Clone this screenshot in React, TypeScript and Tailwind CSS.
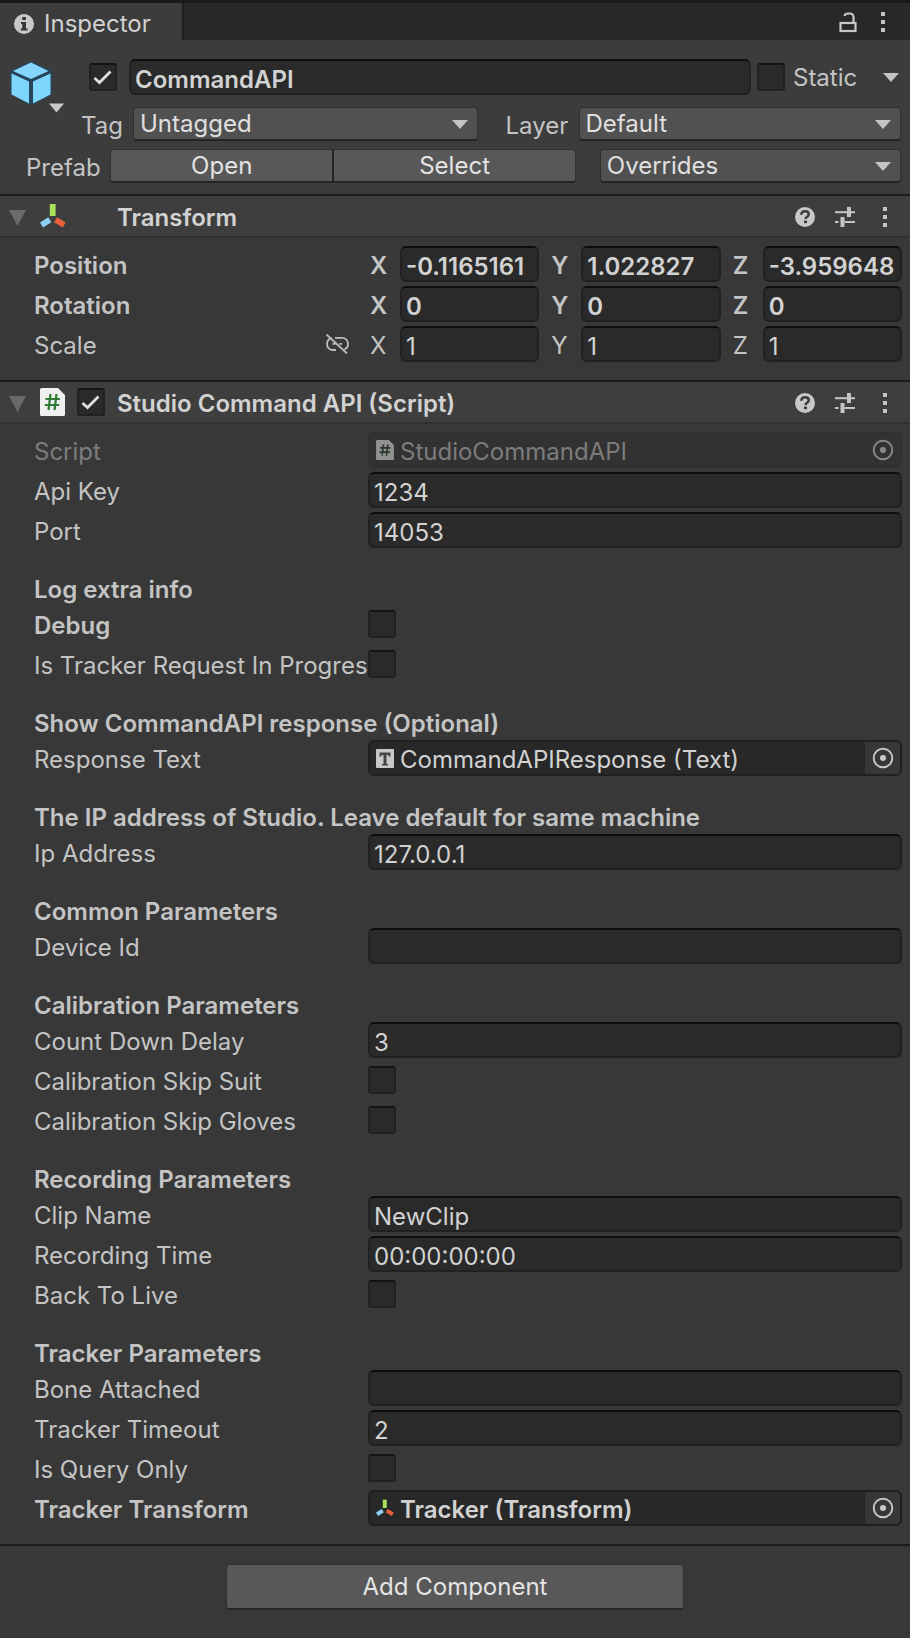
import React, { useId } from 'react';

const inputClass =
  'h-9 w-full min-w-0 rounded-md border-2 border-[#212121] border-t-[#0d0d0d] bg-[#2a2a2a] pl-1 pt-1 text-[#d2d2d2] outline-none';

function Kebab() {
  return (
    <svg className="h-5 w-5" viewBox="0 0 20 20" fill="#c4c4c4">
      <rect x="8" y="0" width="4" height="4" />
      <rect x="8" y="8" width="4" height="4" />
      <rect x="8" y="16" width="4" height="4" />
    </svg>
  );
}

function HelpIcon() {
  return (
    <svg className="h-5 w-5" viewBox="0 0 20 20">
      <circle cx="10" cy="10" r="10" fill="#c8c8c8" />
      <path d="M6.2 7.8C6.3 5.4 8 4.2 10 4.200c2.200 0 3.800 1.200 3.800 3.100 0 2.300-3.100 2.500-3.400 4.700" fill="none" stroke="#3c3c3c" strokeWidth="2.400" />
      <rect x="9" y="13.600" width="3" height="2.600" fill="#3c3c3c" />
    </svg>
  );
}

function PresetIcon() {
  return (
    <svg className="h-5 w-5" viewBox="0 0 20 20" fill="#c4c4c4">
      <rect x="0" y="4.200" width="12" height="2" />
      <rect x="12" y="0" width="4" height="10" />
      <rect x="16" y="4.200" width="4" height="2" />
      <rect x="0" y="14" width="3.500" height="2" />
      <rect x="5.500" y="10" width="4" height="10" />
      <rect x="9.500" y="14" width="10.500" height="2" />
    </svg>
  );
}

function AxisIcon({ className }: { className: string }) {
  return (
    <svg className={className} viewBox="0 0 26 26" fill="none" strokeWidth="5.800">
      <path d="M12.700 1v12" stroke="#a8e05a" />
      <path d="M9.800 16.800L1.500 22" stroke="#8fd0f5" />
      <path d="M15.600 16.800l8.600 5.200" stroke="#e8603c" />
    </svg>
  );
}

function ScriptIcon({ className, stroke = '#2f7a35' }: { className: string; stroke?: string }) {
  return (
    <svg className={className} viewBox="0 0 25 28">
      <path d="M1.500 0H18l7 7v19.500a1.500 1.500 0 0 1-1.500 1.500h-22A1.500 1.500 0 0 1 0 26.500V1.500A1.500 1.500 0 0 1 1.500 0z" fill="#f0f0f0" />
      <path d="M10.500 6L8.500 22M16.500 6l-2 16M5.500 11h14.500M4.800 17h14.500" fill="none" stroke={stroke} strokeWidth="2.200" />
    </svg>
  );
}

function TextIcon({ className }: { className: string }) {
  return (
    <svg className={className} viewBox="0 0 18 19">
      <rect width="18" height="19" rx="1" fill="#c8c8c8" />
      <path d="M3.500 3.500h11v4h-2v-1.500h-2v9h1.500v1.500H6v-1.500h1.500V6h-2v1.500h-2z" fill="#444" />
    </svg>
  );
}

function Caret({ className }: { className: string }) {
  return (
    <svg className={className} viewBox="0 0 16 9" fill="currentColor">
      <path d="M0 0h16L8 9z" />
    </svg>
  );
}

function Checkbox({ id, label, checked = false }: { id?: string; label?: string; checked?: boolean }) {
  return (
    <span className="grid h-7 w-7 shrink-0">
      <input
        id={id}
        aria-label={label}
        type="checkbox"
        defaultChecked={checked}
        className="peer col-start-1 row-start-1 h-7 w-7 appearance-none rounded-[3px] border-2 border-[#212121] border-t-[#141414] bg-[#2a2a2a]"
      />
      <svg
        className="pointer-events-none invisible col-start-1 row-start-1 h-7 w-7 peer-checked:visible"
        viewBox="0 0 28 28"
        fill="none"
        stroke="#e0e0e0"
        strokeWidth="2.800"
      >
        <path d="M5.500 15l5 4.500L21.500 8.500" />
      </svg>
    </span>
  );
}

function Dropdown({ id, label, value }: { id?: string; label?: string; value: string }) {
  return (
    <span className="grid flex-1 items-center">
      <select
        id={id}
        aria-label={label}
        className="col-start-1 row-start-1 h-[34px] w-full appearance-none rounded-[4px] border border-[#303030] border-b-2 border-b-[#242424] bg-[#515151] pl-1.5 text-[#e0e0e0]"
      >
        <option>{value}</option>
      </select>
      <Caret className="pointer-events-none col-start-1 row-start-1 mr-2.5 h-[9px] w-4 justify-self-end text-[#c4c4c4]" />
    </span>
  );
}

function Row({ label, bold, dim, children }: { label: string; bold?: boolean; dim?: boolean; children: (id: string) => React.ReactNode }) {
  const id = useId();
  return (
    <div className={`flex h-9 items-center ${bold ? 'font-semibold' : ''}`}>
      <label htmlFor={id} className={`w-[334px] shrink-0 overflow-hidden pt-1 whitespace-nowrap ${dim ? 'text-[#7c7c7c]' : ''}`}>
        {label}
      </label>
      {children(id)}
    </div>
  );
}

function TextRow({ label, value }: { label: string; value: string }) {
  return <Row label={label}>{(id) => <input id={id} type="text" defaultValue={value} className={inputClass} />}</Row>;
}

function ToggleRow({ label, bold }: { label: string; bold?: boolean }) {
  return <Row label={label} bold={bold}>{(id) => <Checkbox id={id} />}</Row>;
}

interface ObjectRowProps {
  label: string;
  value: string;
  icon: React.ReactNode;
  bold?: boolean;
  disabled?: boolean;
}

function ObjectRow({ label, value, icon, bold, disabled }: ObjectRowProps) {
  return (
    <Row label={label} bold={bold} dim={disabled}>
      {(id) => (
        <div className={`flex h-9 min-w-0 flex-1 items-center rounded-md border-2 pl-1.5 ${disabled ? 'border-[#303030] bg-[#323232] text-[#7c7c7c]' : 'border-[#202020] bg-[#282828] text-[#d2d2d2]'}`}>
          <span className={disabled ? 'opacity-50' : ''}>{icon}</span>
          <input id={id} type="text" readOnly disabled={disabled} defaultValue={value} className="ml-1.5 h-8 min-w-0 flex-1 pt-1 outline-none" />
          <button
            type="button"
            disabled={disabled}
            aria-label={`Pick ${label}`}
            className={`flex h-8 w-[35px] items-center justify-center rounded-r-[4px] ${disabled ? 'text-[#8a8a8a]' : 'bg-[#373737] text-[#c8c8c8]'}`}
          >
            <svg className="h-[22px] w-[22px]" viewBox="0 0 22 22">
              <circle cx="11" cy="11" r="9.300" fill="none" stroke="currentColor" strokeWidth="1.900" />
              <circle cx="11" cy="11" r="3" fill="currentColor" />
            </svg>
          </button>
        </div>
      )}
    </Row>
  );
}

function Header({ children }: { children: string }) {
  return <h3 className="flex h-[50px] items-end leading-6 font-semibold whitespace-nowrap">{children}</h3>;
}

function VectorRow({ label, values, bold, linkable }: { label: string; values: string[]; bold?: boolean; linkable?: boolean }) {
  return (
    <div className={`flex h-9 items-center ${bold ? 'font-semibold' : ''}`}>
      <div className="flex w-[336px] shrink-0 items-center pr-5">
        <span className="flex-1 pt-1">{label}</span>
        {linkable && (
          <button type="button" aria-label="Constrain proportions">
            <svg className="h-5 w-[26px]" viewBox="0 0 26 20" fill="none" stroke="#bdbdbd" strokeWidth="1.800">
              <path d="M8 4.200a6 6 0 0 0 0 11.800h4M11 3.800h7a6.100 6.100 0 0 1 2.500 11.600M8.500 9.900h3M15.500 9.900h2.500" />
              <path d="M2.500 0.500L23 19.500" />
            </svg>
          </button>
        )}
      </div>
      <div className="grid flex-1 grid-cols-3 gap-3">
        {['X', 'Y', 'Z'].map((axis, i) => (
          <label key={axis} className="flex items-center">
            <span className="w-[30px] shrink-0 pt-1">{axis}</span>
            <input type="text" aria-label={`${label} ${axis}`} defaultValue={values[i]} className={inputClass} />
          </label>
        ))}
      </div>
    </div>
  );
}

function ComponentHeader({ title, icon, toggle }: { title: string; icon: React.ReactNode; toggle?: boolean }) {
  return (
    <div className="flex h-11 items-center border-t-2 border-b-2 border-t-[#1c1c1c] border-b-[#313131] bg-[#3e3e3e] pr-[15px] pl-[9px]">
      <button type="button" aria-label={`Collapse ${title}`} className="w-[31px] pt-1">
        <svg className="h-4 w-[17px]" viewBox="0 0 17 16" fill="#6a6a6a">
          <path d="M0 0h17L8.500 16z" />
        </svg>
      </button>
      <span className="w-[37px]">{icon}</span>
      <span className="w-10">{toggle && <Checkbox label={`Enable ${title}`} checked />}</span>
      <h2 className="flex-1 pt-1 font-semibold text-[#d2d2d2]">{title}</h2>
      <div className="flex items-center gap-5 pt-0.5">
        <button type="button" aria-label="Help"><HelpIcon /></button>
        <button type="button" aria-label="Presets"><PresetIcon /></button>
        <button type="button" aria-label="More"><Kebab /></button>
      </div>
    </div>
  );
}

export default function App() {
  return (
    <div className="min-h-screen bg-[#383838] font-[Inter,sans-serif] text-2xl leading-8 text-[#c4c4c4]">
      <div className="flex h-10 items-stretch border-t-[3px] border-[#191919] bg-[#282828]">
        <div className="flex w-[184px] items-center gap-2.5 border-r-2 border-[#1f1f1f] bg-[#3c3c3c] pt-1 pl-3.5">
          <svg className="h-5 w-5" viewBox="0 0 20 20">
            <circle cx="10" cy="10" r="10" fill="#c8c8c8" />
            <path d="M8.300 3h3.600v3H8.300zM7 8h5v6.500h1.500v2H6.800v-2h1.500V10H7z" fill="#333" />
          </svg>
          <h1 className="text-[#d2d2d2]">Inspector</h1>
        </div>
        <div className="flex flex-1 items-center justify-end gap-4 pr-[17px]">
          <button type="button" aria-label="Lock">
            <svg className="h-[22px] w-[18px]" viewBox="0 0 18 22" fill="none" stroke="#c8c8c8" strokeWidth="2.200">
              <rect x="1.500" y="12" width="15" height="8" />
              <path d="M14.500 12V6a3.500 3.500 0 0 0-3.500-3.500H9A3.500 3.500 0 0 0 5.500 5" />
            </svg>
          </button>
          <button type="button" aria-label="Tab options"><Kebab /></button>
        </div>
      </div>

      <div className="flex flex-col bg-[#3c3c3c] pt-[19px] pr-2 pb-[11px]">
        <div className="flex h-9 items-center">
          <button type="button" aria-label="Object icon" className="-mb-5 ml-2.5 w-[79px]">
            <svg className="h-[52px] w-14" viewBox="0 0 56 52">
              <path d="M21 0.500L42 9.500V33.500L21 44.500L0.500 33.500V9.500z" fill="#26455a" />
              <path d="M21 1.500L38.500 10L21 18L3 10z" fill="#84d6fd" />
              <path d="M1.500 12.500L19 20.500V42.500L1.500 33.500z" fill="#7fd6fd" />
              <path d="M40.500 12.500L23 20.500V42.500L40.500 33.500z" fill="#7fd6fd" />
              <path d="M39 42.500h15L46.500 51.500z" fill="#c8c8c8" />
            </svg>
          </button>
          <Checkbox label="Active" checked />
          <input
            type="text"
            aria-label="Name"
            defaultValue="CommandAPI"
            className="ml-3 h-9 min-w-0 flex-1 rounded-md border-2 border-[#212121] border-t-[#0d0d0d] bg-[#2a2a2a] pt-1 pl-1 font-semibold text-[#d2d2d2] outline-none"
          />
          <label className="ml-1.5 flex items-center gap-2">
            <Checkbox />
            <span className="w-[90px] pt-0.5">Static</span>
          </label>
          <button type="button" aria-label="Static options" className="mr-[3px] flex">
            <Caret className="h-[9px] w-4" />
          </button>
        </div>

        <div className="mt-3 flex h-[34px] items-center pr-px pl-[81px]">
          <label htmlFor="tag" className="w-[52px] shrink-0 pt-1">Tag</label>
          <div className="flex flex-[344]"><Dropdown id="tag" value="Untagged" /></div>
          <label htmlFor="layer" className="w-[101px] shrink-0 pt-1 pl-7">Layer</label>
          <div className="flex flex-[322]"><Dropdown id="layer" value="Default" /></div>
        </div>

        <div className="mt-2 flex h-[34px] items-center pr-px pl-[26px]">
          <span className="w-[84px] shrink-0 pt-1">Prefab</span>
          <div className="flex h-[34px] flex-[465] rounded-[4px] border border-[#303030] border-b-2 border-b-[#242424] bg-[#585858] text-[#e4e4e4]">
            <button type="button" className="flex-[222] border-r-2 border-[#242424]">Open</button>
            <button type="button" className="flex-[241]">Select</button>
          </div>
          <div className="ml-6 flex flex-[302]"><Dropdown label="Overrides" value="Overrides" /></div>
        </div>
      </div>

      <ComponentHeader title="Transform" icon={<AxisIcon className="h-[26px] w-[26px]" />} />
      <div className="flex flex-col gap-1 pt-2 pr-2 pb-[18px] pl-[34px]">
        <VectorRow label="Position" bold values={['-0.1165161', '1.022827', '-3.959648']} />
        <VectorRow label="Rotation" bold values={['0', '0', '0']} />
        <VectorRow label="Scale" linkable values={['1', '1', '1']} />
      </div>

      <ComponentHeader title="Studio Command API (Script)" toggle icon={<ScriptIcon className="h-7 w-[25px]" />} />
      <div className="flex flex-col gap-1 border-b-2 border-[#1c1c1c] pt-2 pr-2 pb-[18px] pl-[34px]">
        <ObjectRow label="Script" value="StudioCommandAPI" disabled icon={<ScriptIcon className="h-5 w-[18px]" stroke="#1c3a20" />} />
        <TextRow label="Api Key" value="1234" />
        <TextRow label="Port" value="14053" />

        <Header>Log extra info</Header>
        <ToggleRow label="Debug" bold />
        <ToggleRow label="Is Tracker Request In Progres" />

        <Header>Show CommandAPI response (Optional)</Header>
        <ObjectRow label="Response Text" value="CommandAPIResponse (Text)" icon={<TextIcon className="h-[19px] w-[18px]" />} />

        <Header>The IP address of Studio. Leave default for same machine</Header>
        <TextRow label="Ip Address" value="127.0.0.1" />

        <Header>Common Parameters</Header>
        <TextRow label="Device Id" value="" />

        <Header>Calibration Parameters</Header>
        <TextRow label="Count Down Delay" value="3" />
        <ToggleRow label="Calibration Skip Suit" />
        <ToggleRow label="Calibration Skip Gloves" />

        <Header>Recording Parameters</Header>
        <TextRow label="Clip Name" value="NewClip" />
        <TextRow label="Recording Time" value="00:00:00:00" />
        <ToggleRow label="Back To Live" />

        <Header>Tracker Parameters</Header>
        <TextRow label="Bone Attached" value="" />
        <TextRow label="Tracker Timeout" value="2" />
        <ToggleRow label="Is Query Only" />
        <ObjectRow label="Tracker Transform" value="Tracker (Transform)" bold icon={<AxisIcon className="h-[18px] w-[18px]" />} />
      </div>

      <div className="flex justify-center py-[18px]">
        <button type="button" className="h-[46px] w-[458px] rounded-[4px] border border-[#303030] border-b-2 border-b-[#242424] bg-[#585858] text-[#e4e4e4]">
          Add Component
        </button>
      </div>
    </div>
  );
}
